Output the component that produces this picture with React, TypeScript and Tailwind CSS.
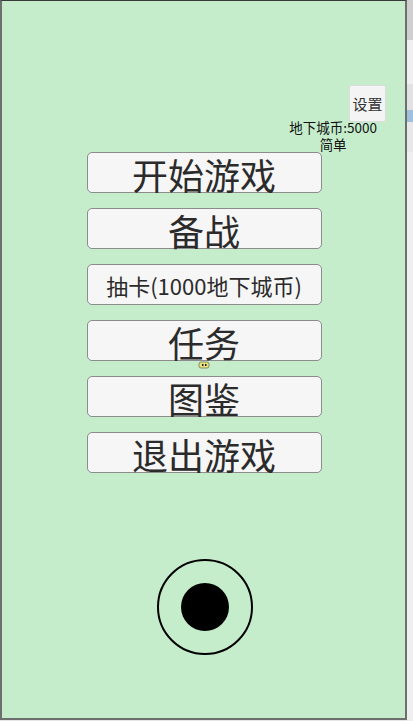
const menuItems = [
  { label: "开始游戏", size: "text-[36px]" },
  { label: "备战", size: "text-[36px]" },
  { label: "抽卡(1000地下城币)", size: "text-[22px]" },
  { label: "任务", size: "text-[36px]" },
  { label: "图鉴", size: "text-[36px]" },
  { label: "退出游戏", size: "text-[36px]" },
];

const App = () => {
  return (
    <div
      className="flex h-[721px] w-[413px] bg-[#e6e6e6] overflow-hidden"
      style={{ fontFamily: '"Noto Sans CJK SC", "Noto Sans", sans-serif' }}
    >
      {/* Window */}
      <div className="relative flex flex-col w-[407px] h-[720px] bg-[#c5edcc] border-t border-t-[#3a3a3a] border-l-2 border-r-2 border-b-2 border-[#6e6e6e]">
        {/* Top right: settings + currency */}
        <div className="flex flex-col items-end pt-[84px]">
          <button className="mr-[19px] w-[37px] h-[37px] bg-[#f4f4f4] border border-[#dcdcdc] rounded-[2px] text-[15px] leading-none text-[#333]">
            设置
          </button>
          <div className="mr-[28px] -mt-[3px] flex flex-col items-center text-[13.5px] leading-[17px] text-[#111]">
            <span>地下城币:5000</span>
            <span>简单</span>
          </div>
        </div>

        {/* Menu buttons */}
        <div className="flex flex-col items-center gap-[15px] mt-[-1px] pl-[1px]">
          {menuItems.map((item) => (
            <button
              key={item.label}
              className={`relative w-[235px] h-[41px] bg-[#f6f6f6] border border-[#8c8c8c] rounded-[5px] flex items-center justify-center text-[#2b2b2b] leading-none ${item.size}`}
            >
              <span className={item.size === "text-[36px]" ? "mt-[2px]" : ""}>
                {item.label}
              </span>
              {item.label === "任务" && (
                <svg
                  className="absolute left-[110px] top-[40px]"
                  width="12"
                  height="8"
                  viewBox="0 0 12 8"
                >
                  <rect x="1" y="1" width="10" height="6" rx="2" fill="#e8e27a" stroke="#8a8a6a" strokeWidth="1" />
                  <rect x="4" y="3" width="1.5" height="2" fill="#222" />
                  <rect x="7" y="3" width="1.5" height="2" fill="#222" />
                </svg>
              )}
            </button>
          ))}
        </div>

        {/* Joystick */}
        <div className="flex justify-center mt-[86px] pl-[3px]">
          <div className="w-[96px] h-[96px] rounded-full border-2 border-black flex items-center justify-center">
            <div className="w-[48px] h-[48px] rounded-full bg-black" />
          </div>
        </div>
      </div>

      {/* Background strip on the right */}
      <div className="flex flex-col flex-1">
        <div className="h-[40px] bg-[#cfcfcf]" />
        <div className="h-[44px] bg-[#f0f0f0]" />
        <div className="h-[26px] bg-[#e2e2e2]" />
        <div className="h-[12px] bg-[#9fc0dc]" />
        <div className="h-[30px] bg-[#e8e8e8]" />
        <div className="flex-1 bg-[#efefef]" />
      </div>
    </div>
  );
};

export default App;
